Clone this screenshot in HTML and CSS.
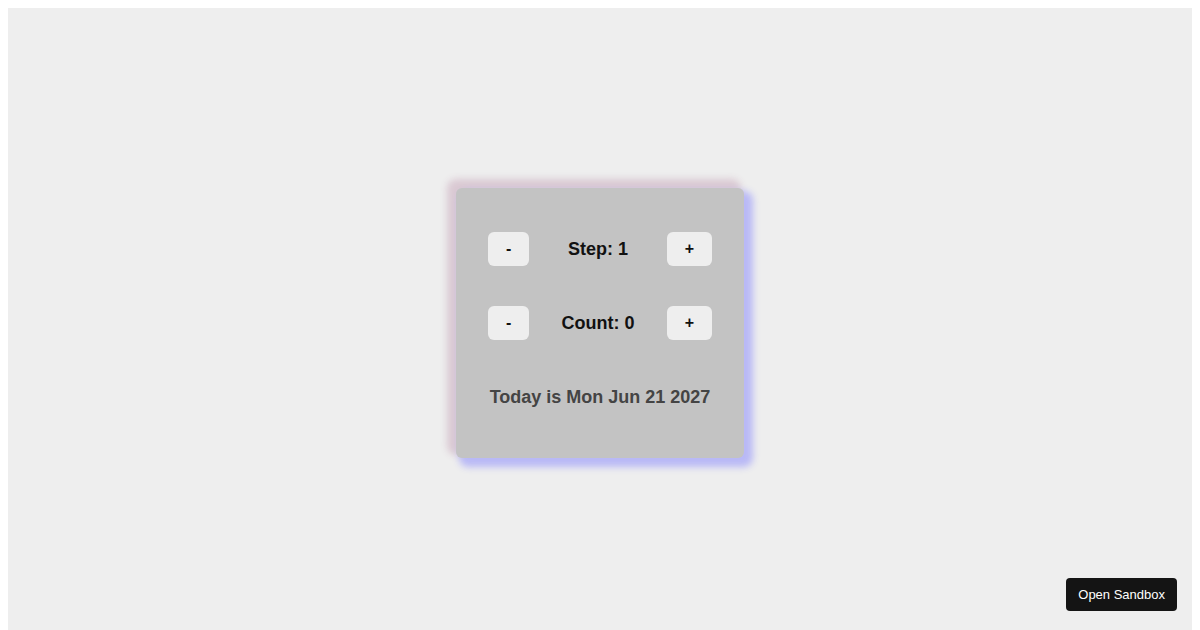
FILE: index.html
```html
<!DOCTYPE html>
<html>
<head>
<meta charset="utf-8">
<link rel="stylesheet" href="styles.css">
</head>
<body>
<div class="page">
  <div class="card">
    <div class="row">
      <button class="btn">-</button>
      <span class="label">Step: 1</span>
      <button class="btn">+</button>
    </div>
    <div class="row">
      <button class="btn">-</button>
      <span class="label">Count: 0</span>
      <button class="btn">+</button>
    </div>
    <p class="date">Today is Mon Jun 21 2027</p>
  </div>
  <button class="sandbox">Open Sandbox</button>
</div>
</body>
</html>
```
FILE: styles.css
```css
html, body {
  margin: 0;
  padding: 0;
}
body {
  margin: 8px 8px 0 8px;
  background: #ffffff;
  font-family: "Liberation Sans", Arial, sans-serif;
}
.page {
  height: 100vh;
  background: #eeeeee;
  display: flex;
  align-items: center;
  justify-content: center;
}
.card {
  width: 224px;
  padding: 44px 32px 50px;
  background: #c3c3c3;
  border-radius: 6px;
  box-shadow: 6px 6px 7px 3px #b9b9f6, -6px -6px 7px 3px #dac9d3;
  display: flex;
  flex-direction: column;
  gap: 40px;
}
.row {
  display: flex;
  justify-content: space-between;
  align-items: center;
}
.btn {
  font-family: "Liberation Sans", Arial, sans-serif;
  font-size: 16px;
  font-weight: bold;
  color: #111;
  background: #eeeeee;
  border: none;
  border-radius: 6px;
  height: 34px;
  padding: 0 18px;
}
.label {
  font-size: 18px;
  font-weight: bold;
  color: #111;
}
.date {
  margin: 7px 0 0;
  font-size: 18px;
  font-weight: bold;
  color: #444;
  text-align: center;
  line-height: 21px;
}
.sandbox {
  position: fixed;
  right: 23px;
  bottom: 19px;
  background: #141414;
  color: #fff;
  border: none;
  border-radius: 4px;
  font-family: "Liberation Sans", Arial, sans-serif;
  font-size: 13px;
  height: 33px;
  padding: 0 12px;
}
```
